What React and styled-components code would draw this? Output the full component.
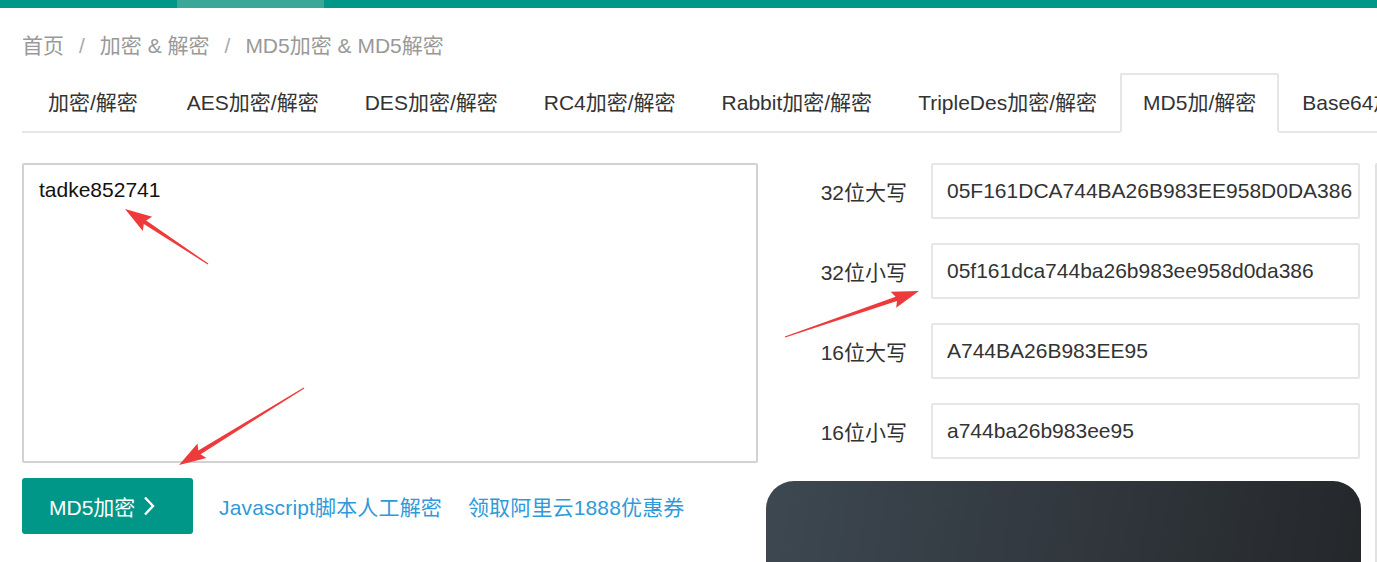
import React from 'react';
import styled, { createGlobalStyle } from 'styled-components';

const GlobalStyle = createGlobalStyle`
  html, body { margin: 0; padding: 0; background: #fff; overflow: hidden; }
  body {
    font-family: "Liberation Sans", Arial, "Noto Sans CJK SC", sans-serif;
    font-size: 21px;
    color: #333;
  }
  * { box-sizing: border-box; }
`;

const Page = styled.div`
  position: relative;
  width: 1377px;
  height: 562px;
  overflow: hidden;
`;

const TopNav = styled.div`
  display: flex;
  height: 8px;
  background: #009688;
`;

const NavItem = styled.div`
  width: ${p => p.$w}px;
  height: 100%;
  background: ${p => (p.$active ? '#3aa898' : 'transparent')};
`;

const Main = styled.div`
  padding-left: 22px;
`;

const Breadcrumb = styled.div`
  margin-top: 26px;
  height: 24px;
  line-height: 24px;
  color: #999;
  white-space: nowrap;
`;

const Crumb = styled.span`
  color: #999;
`;

const Sep = styled.span`
  margin: 0 15px;
  color: #aaa;
`;

const TabTitle = styled.ul`
  display: flex;
  margin: 15px 0 0 0;
  padding: 0 0 0 3px;
  list-style: none;
  height: 60px;
  border-bottom: 2px solid #e6e6e6;
  white-space: nowrap;
`;

const TabItem = styled.li`
  flex: none;
  height: 60px;
  margin-bottom: -2px;
  padding: 0 21px;
  border: 2px solid ${p => (p.$active ? '#e6e6e6' : 'transparent')};
  border-bottom-color: ${p => (p.$active ? '#fff' : 'transparent')};
  border-radius: 2px 2px 0 0;
  background: ${p => (p.$active ? '#fff' : 'transparent')};
  line-height: 56px;
  color: #333;
  &:first-child { margin-right: 3px; }
`;

const Body = styled.div`
  display: flex;
  align-items: flex-start;
  margin-top: 30px;
`;

const LeftCol = styled.div`
  flex: none;
  width: 736px;
  display: flex;
  flex-direction: column;
`;

const Source = styled.textarea`
  display: block;
  width: 736px;
  height: 300px;
  margin: 0;
  padding: 13px 15px;
  border: 2px solid #d2d2d2;
  border-radius: 2px;
  resize: none;
  outline: none;
  font-family: "Liberation Sans", Arial, "Noto Sans CJK SC", sans-serif;
  font-size: 21px;
  line-height: 24px;
  color: #111;
`;

const ActionRow = styled.div`
  display: flex;
  align-items: center;
  margin-top: 15px;
`;

const PrimaryButton = styled.button`
  display: inline-flex;
  align-items: center;
  gap: 8px;
  width: 171px;
  height: 56px;
  padding: 0 0 0 27px;
  border: none;
  border-radius: 3px;
  background: #009688;
  color: #fff;
  font-family: "Liberation Sans", Arial, "Noto Sans CJK SC", sans-serif;
  font-size: 21px;
  cursor: pointer;
`;

const TextLink = styled.a`
  margin-left: 26px;
  color: #2f9ad9;
  text-decoration: none;
  white-space: nowrap;
  letter-spacing: 0.15px;
`;

const RightCol = styled.div`
  flex: none;
  width: 595px;
  margin-left: 8px;
  display: flex;
  flex-direction: column;
`;

const Fields = styled.div`
  display: flex;
  flex-direction: column;
  gap: 24px;
`;

const FieldRow = styled.div`
  display: flex;
  align-items: center;
  gap: 24px;
  height: 56px;
`;

const FieldLabel = styled.label`
  flex: none;
  width: 141px;
  text-align: right;
  color: #333;
  white-space: nowrap;
`;

const HashInput = styled.input`
  flex: none;
  width: 429px;
  height: 56px;
  margin: 0;
  padding: 0 1px 0 14px;
  border: 2px solid #e6e6e6;
  border-radius: 2px;
  outline: none;
  font-family: "Liberation Sans", Arial, sans-serif;
  font-size: 21px;
  color: #333;
  background: #fff;
`;

const DarkCard = styled.div`
  margin-top: 22px;
  width: 595px;
  height: 140px;
  border-radius: 28px;
  background: linear-gradient(100deg, #3d4851 0%, #30363c 55%, #24272a 100%);
`;

const EdgePanel = styled.div`
  flex: none;
  width: 200px;
  height: 420px;
  margin-left: 14px;
  border: 2px solid #e2e2e2;
  border-radius: 2px;
`;

const Overlay = styled.svg`
  position: absolute;
  left: 0;
  top: 0;
  width: 1377px;
  height: 562px;
  pointer-events: none;
`;

function arrowPoints(tx, ty, px, py) {
  const dx = px - tx;
  const dy = py - ty;
  const len = Math.hypot(dx, dy);
  const ux = dx / len;
  const uy = dy / len;
  const nx = -uy;
  const ny = ux;
  const head = 24;
  const bx = px - ux * head;
  const by = py - uy * head;
  const pts = [
    [tx + nx * 0.5, ty + ny * 0.5],
    [bx + nx * 2.2, by + ny * 2.2],
    [bx - ux * 3 + nx * 8.5, by - uy * 3 + ny * 8.5],
    [px, py],
    [bx - ux * 3 - nx * 8.5, by - uy * 3 - ny * 8.5],
    [bx - nx * 2.2, by - ny * 2.2],
    [tx - nx * 0.5, ty - ny * 0.5],
  ];
  return pts.map(p => p.map(v => v.toFixed(1)).join(',')).join(' ');
}

const Arrow = ({ from, to }) => (
  <polygon points={arrowPoints(from[0], from[1], to[0], to[1])} fill="#ee3a3a" />
);

const tabs = [
  '加密/解密',
  'AES加密/解密',
  'DES加密/解密',
  'RC4加密/解密',
  'Rabbit加密/解密',
  'TripleDes加密/解密',
  'MD5加/解密',
  'Base64加密/解密',
];

const hashes = [
  ['32位大写', '05F161DCA744BA26B983EE958D0DA386'],
  ['32位小写', '05f161dca744ba26b983ee958d0da386'],
  ['16位大写', 'A744BA26B983EE95'],
  ['16位小写', 'a744ba26b983ee95'],
];

export default function App() {
  return (
    <Page>
      <GlobalStyle />
      <TopNav>
        <NavItem $w={177} />
        <NavItem $w={147} $active />
      </TopNav>
      <Main>
        <Breadcrumb>
          <Crumb>首页</Crumb>
          <Sep>/</Sep>
          <Crumb>加密 &amp; 解密</Crumb>
          <Sep>/</Sep>
          <Crumb>MD5加密 &amp; MD5解密</Crumb>
        </Breadcrumb>
        <TabTitle>
          {tabs.map(t => (
            <TabItem key={t} $active={t === 'MD5加/解密'}>{t}</TabItem>
          ))}
        </TabTitle>
        <Body>
          <LeftCol>
            <Source readOnly value="tadke852741" />
            <ActionRow>
              <PrimaryButton>
                MD5加密
                <svg width="12" height="20" viewBox="0 0 12 20">
                  <polyline points="2,1.5 10,10 2,18.5" fill="none" stroke="#fff" strokeWidth="2.4" />
                </svg>
              </PrimaryButton>
              <TextLink href="#">Javascript脚本人工解密</TextLink>
              <TextLink href="#">领取阿里云1888优惠券</TextLink>
            </ActionRow>
          </LeftCol>
          <RightCol>
            <Fields>
              {hashes.map(([label, value]) => (
                <FieldRow key={label}>
                  <FieldLabel>{label}</FieldLabel>
                  <HashInput readOnly value={value} />
                </FieldRow>
              ))}
            </Fields>
            <DarkCard />
          </RightCol>
          <EdgePanel />
        </Body>
      </Main>
      <Overlay viewBox="0 0 1377 562">
        <Arrow from={[208, 264]} to={[125, 209]} />
        <Arrow from={[785, 337]} to={[919, 291]} />
        <Arrow from={[304, 388]} to={[179, 465]} />
      </Overlay>
    </Page>
  );
}
